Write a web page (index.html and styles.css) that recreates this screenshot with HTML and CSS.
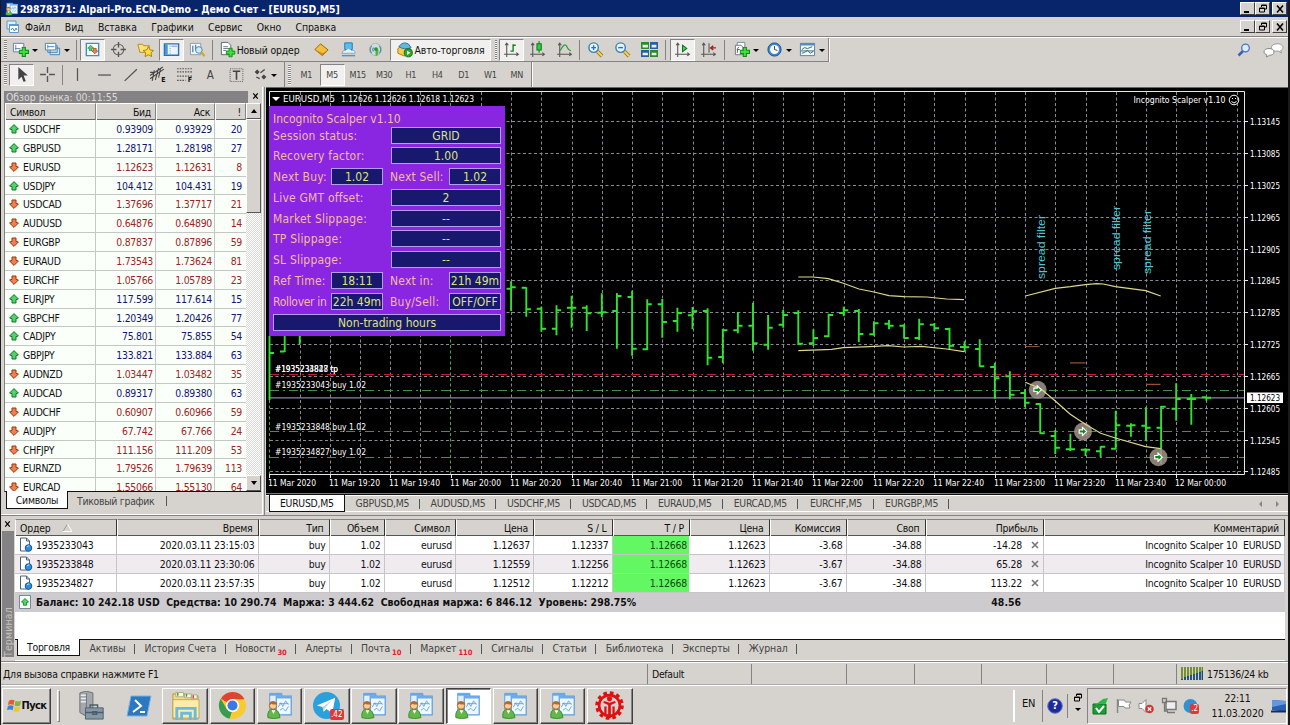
FILE: index.html
```
<!DOCTYPE html>
<html lang="ru">
<head>
<meta charset="UTF-8">
<meta name="viewport" content="width=device-width, initial-scale=1.0">
<title>29878371: Alpari-Pro.ECN-Demo</title>
<link rel="stylesheet" href="styles.css">
</head>
<body>
<svg class="defs" width="0" height="0">
    <symbol id="up" viewBox="0 0 10 10"><path d="M5 .6 9.4 5 7 5.6V9H3V5.6L.6 5z" fill="#4cd668" stroke="#16702c"/></symbol>
    <symbol id="down" viewBox="0 0 10 10"><path d="M5 9.4.6 5 3 4.4V1h4v3.400L9.400 5z" fill="#f08050" stroke="#9a3410"/></symbol>
    <symbol id="axes" viewBox="0 0 16 16"><path d="M3.500 15V2M1 12.500h13M2 4l1.500-2L5 4M12.500 11l2 1.500-2 1.500" fill="none" stroke="#555"/></symbol>
    <symbol id="plus" viewBox="0 0 10 10"><path d="M3.500.5h3v3h3v3h-3v3h-3v-3h-3v-3h3z" fill="#3ee03e" stroke="#0c8a14"/></symbol>
    <symbol id="min" viewBox="0 0 12 10"><path d="M2 8h5" stroke="#000" stroke-width="2"/></symbol>
    <symbol id="restore" viewBox="0 0 12 10"><path d="M4.500 3V1h5v4H8M2.500 4h5v4h-5zM4 1.500h6M2 4.500h6" fill="none" stroke="#000"/></symbol>
    <symbol id="close" viewBox="0 0 12 10"><path d="m3 1.500 6 7M9 1.500l-6 7" stroke="#000" stroke-width="1.600"/></symbol>
    <symbol id="doc" viewBox="0 0 14 16"><path d="M1.500 1h6l3 3v10h-9z" fill="#fff" stroke="#4a6078"/><path d="M7.500 1v3h3" fill="none" stroke="#4a6078"/><circle cx="9.500" cy="11" r="3.300" fill="#2a90dc" stroke="#145898"/><path d="M8 10q1-1.500 2.500-1" stroke="#bfe4ff" fill="none"/></symbol>
    <symbol id="person" viewBox="0 0 30 28">
        <path d="M4 1h13v18H4z" fill="#dff0fc" stroke="#5b9be0"/><path d="M4 1h13v2.500H4z" fill="#6aa6e6"/>
        <path d="M11 4h16v20H11z" fill="#eef8ff" stroke="#5a9ce4" stroke-width="1.300"/><path d="M11 4h16v2.500H11z" fill="#6aaaec"/>
        <path d="m13 16 3-5 2 4 3-6 3 4M15 19l3-2 3 3 3-5M14 12h10" fill="none" stroke="#6aa4e0"/>
        <path d="M2 27q-1-9 5.500-9t7.500 9q-7 2-13 0z" fill="#62b848" stroke="#3f8a2e"/>
        <circle cx="7.500" cy="14" r="4" fill="#f8cc94" stroke="#a86830"/><path d="M3.500 14q0-5 4.500-4.500T12 13q-5 0-6-1z" fill="#b06a30"/><path d="m6 19 2 4 2-4" fill="#fff"/>
    </symbol>
    <symbol id="zoomglass" viewBox="0 0 18 18"><path d="m11 11 5 5" stroke="#a87c10" stroke-width="4"/><path d="m11 11 5 5" stroke="#f4d460" stroke-width="2.200"/><circle cx="7" cy="7" r="5" fill="#e4f6ff" stroke="#3a80b8" stroke-width="1.500"/></symbol>
    <symbol id="arrow" viewBox="0 0 12 12"><path d="m6 1 5 5-5 5V8H2V4h4z" fill="#0a8a1a" stroke="#fff" stroke-width="1.400"/></symbol>
</svg>

<div class="window">
    <header class="title">
        <svg width="14" height="14" viewBox="0 0 30 28"><use href="#person"/></svg>
        <h1>29878371: Alpari-Pro.ECN-Demo - Демо Счет - [EURUSD,M5]</h1>
        <div class="winbtns"><b><svg><use href="#min"/></svg></b><b><svg><use href="#restore"/></svg></b><b><svg><use href="#close"/></svg></b></div>
    </header>
    <nav class="menu">
        <svg class="menu-logo" width="14" height="14" viewBox="0 0 14 14"><path d="M1 1h9v8H1z" fill="#dff0ff" stroke="#5a98d8"/><path d="M3.500 4.500h9v8h-9z" fill="#fff" stroke="#5a98d8"/><path d="M3.500 5h9" stroke="#5a98d8" stroke-width="2"/><path d="m5 10 1.500-2 2 3L10 8l1 2" fill="none" stroke="#48c"/></svg>
        <span>Файл</span><span>Вид</span><span>Вставка</span><span>Графики</span><span>Сервис</span><span>Окно</span><span>Справка</span>
        <div class="winbtns"><b><svg><use href="#min"/></svg></b><b><svg><use href="#restore"/></svg></b><b><svg><use href="#close"/></svg></b></div>
    </nav>

    <div class="toolrow">
        <div class="toolbar tb-main">
            <i class="grip"></i>
            <span class="btn caret narrow"><svg viewBox="0 0 18 16"><path d="M1.500 1.500h11v9h-11z" fill="#fff" stroke="#5a80a8"/><path d="M4 3v6M3 7h6" stroke="#68a" fill="none"/><use href="#plus" x="7" y="5" width="11" height="11"/></svg></span>
            <span class="btn caret narrow"><svg viewBox="0 0 18 16"><path d="M6.500 6.500h10v7h-10zM4 4h10v7H4z" fill="#cfe4f6" stroke="#4a80b0"/><path d="M1.500 1.500h11v7h-11z" fill="#fff" stroke="#4a80b0"/><path d="M4 3v4M4 5h7" stroke="#4a80b0"/></svg></span>
            <i class="sep first"></i>
            <span class="btn on"><svg viewBox="0 0 18 16"><path d="M2.500 1.500h13v13h-13z" fill="#fff" stroke="#3a90c8" stroke-width="1.500"/><use href="#up" x="3.500" y="3" width="7" height="7"/><use href="#down" x="8" y="6" width="7" height="7"/></svg></span>
            <span class="btn"><svg viewBox="0 0 16 16"><circle cx="8" cy="8" r="5" fill="none" stroke="#666"/><path d="M8 1v5M8 10v5M1 8h5M10 8h5" stroke="#555" stroke-width="1.300"/></svg></span>
            <span class="btn"><svg viewBox="0 0 18 16"><path d="M1 2.500h5l1 1.500h6v7H3z" fill="#fce27c" stroke="#b88a18"/><path d="m12 5 1.800 3.500 3.700.5-2.700 2.500.7 4-3.500-2-3.500 2 .7-4L6.500 9l3.700-.5z" fill="#ffe038" stroke="#a87c10"/></svg></span>
            <span class="btn on"><svg viewBox="0 0 18 16"><path d="M1.500 2h15v12h-15z" fill="#eaf6ff" stroke="#2a70b8" stroke-width="1.500"/><path d="M2 2.500h3v11H2z" fill="#4a96d8"/><path d="M9 4.500h6M7 4.500h1M7 7h1M7 9.500h1M7 12h1" stroke="#88b"/></svg></span>
            <span class="btn"><svg viewBox="0 0 18 16"><path d="M1.500 1.500h11v12h-11z" fill="#f4faff" stroke="#89a"/><path d="M4 4v7M7 3v6M10 5v5" stroke="#6688b0" stroke-width="1.500"/><circle cx="10.500" cy="8.500" r="3.500" fill="#cfeaff" stroke="#48a"/><path d="m13 11 3.500 4" stroke="#d8a828" stroke-width="2.500"/></svg></span>
            <i class="sep"></i>
            <span class="btn neworder"><svg viewBox="0 0 18 16"><path d="M2.500.5h7l3 3v10h-10z" fill="#fff" stroke="#567"/><path d="M4.500 5h5M4.500 7h6M4.500 9h3" stroke="#678"/><use href="#plus" x="7" y="6" width="10.500" height="10.500"/></svg>Новый ордер</span>
            <span class="btn"><svg viewBox="0 0 18 16"><path d="m2 8 6-6 8 6.500-6 6z" fill="#f4c03c" stroke="#946010"/><path d="m2 8 8 4 6-3.500-6 6z" fill="#c88818"/></svg></span>
            <span class="btn"><svg viewBox="0 0 18 16"><path d="M5 1h8v7H5z" fill="#58bcf0" stroke="#2478b4"/><path d="M2 12q1-4 4-3 3-4 6 0 4-1 4 3z" fill="#e6f4ff" stroke="#78a8d0"/><path d="M2 14.500h14" stroke="#4898d0" stroke-width="1.500"/></svg></span>
            <span class="btn"><svg viewBox="0 0 18 16"><circle cx="9" cy="8" r="6.500" fill="#cfdde0" stroke="#a4b8bc"/><path d="M5 4q-3 4 0 8M13 4q3 4 0 8M7 6q-2 2 0 4" fill="none" stroke="#5a9098" stroke-width="1.200"/><path d="M9 8v7q4 0 3-7z" fill="#46b83c"/><circle cx="9.500" cy="7.500" r="2" fill="#348c38"/></svg></span>
            <span class="btn autotrade"><svg viewBox="0 0 18 16"><path d="M2 7 8 3l8 5-7 7-7-3z" fill="#f6cc48" stroke="#a87c18"/><path d="M3 5q4-6 10-3l3 4q-7 3-13-1z" fill="#62b8dc" stroke="#287898"/><circle cx="13" cy="11.500" r="4.300" fill="#28a82c" stroke="#0f6c14"/><path d="m11.800 9.200 3.400 2.300-3.400 2.300z" fill="#fff"/></svg>Авто-торговля</span>
            <i class="grip"></i>
            <span class="btn on"><svg viewBox="0 0 16 16"><use href="#axes"/><path d="M9.500 3v7M7 9.500h2.500M9.500 4H12" stroke="#148024" stroke-width="1.300"/></svg></span>
            <span class="btn"><svg viewBox="0 0 16 16"><use href="#axes"/><path d="M9.500 0v11" stroke="#0a7a1a"/><path d="M7.500 2.500h4v6h-4z" fill="#30d040" stroke="#0a7a1a"/></svg></span>
            <span class="btn"><svg viewBox="0 0 16 16"><use href="#axes"/><path d="M4 9q4-8 6-4t4 4" fill="none" stroke="#2a9a3c" stroke-width="1.200"/></svg></span>
            <i class="sep"></i>
            <span class="btn"><svg viewBox="0 0 18 18"><use href="#zoomglass"/><path d="M4.500 7h5M7 4.500v5" stroke="#2870b0" stroke-width="1.500"/></svg></span>
            <span class="btn"><svg viewBox="0 0 18 18"><use href="#zoomglass"/><path d="M4.500 7h5" stroke="#2870b0" stroke-width="1.500"/></svg></span>
            <span class="btn"><svg viewBox="0 0 16 16"><path d="M0 1h7.500v6.500H0zM8.500 8.500H16V15H8.500z" fill="#2c8a2c"/><path d="M8.500 1H16v6.500H8.500zM0 8.500h7.500V15H0z" fill="#2a5ca8"/><path d="M1.500 3.500h5v2.500h-5zM10 3.500h4.500v2.500H10zM1.500 11h5v2.500h-5zM10 11h4.500v2.500H10z" fill="#e4f2e8"/></svg></span>
            <i class="sep wide"></i>
            <span class="btn on"><svg viewBox="0 0 16 16"><use href="#axes"/><path d="m8 4 4 3-4 3z" fill="#58c868" stroke="#0a7a1a"/></svg></span>
            <span class="btn"><svg viewBox="0 0 16 16"><use href="#axes"/><path d="M8.500 2v9" stroke="#555"/><path d="M15 6.500h-4M12.500 4.500l-2.500 2 2.500 2" stroke="#a02020" fill="none" stroke-width="1.300"/></svg></span>
            <i class="sep wide"></i>
            <span class="btn caret"><svg viewBox="0 0 18 16"><path d="M4.500.5h8v11h-8z" fill="#fff" stroke="#789"/><path d="M2.500 3.500h6l2 2v8h-8z" fill="#fff" stroke="#678"/><path d="M6 5.500q-1.500 0-1.500 6M4 8h3" stroke="#555" fill="none"/><use href="#plus" x="7" y="5" width="11" height="11"/></svg></span>
            <span class="btn caret"><svg viewBox="0 0 18 16"><circle cx="9" cy="8" r="7" fill="#3c88d0" stroke="#1c548c"/><circle cx="9" cy="8" r="4.800" fill="#f4faff"/><path d="M9 4.500V8l3 1" fill="none" stroke="#245"/></svg></span>
            <span class="btn caret"><svg viewBox="0 0 18 16"><path d="M1.500 1.500h15v13h-15z" fill="#f0f8ff" stroke="#4a80b0"/><path d="M1.500 2.500h15" stroke="#4a90c8" stroke-width="2.500"/><path d="m3 8 3-2 3 1 5-2M3 12l3-1 3-2 3 3 3-2M2 9.500h14" fill="none" stroke="#466"/></svg></span>
        </div>
        <div class="helpers">
            <svg width="14" height="14" viewBox="0 0 14 14"><path d="M1.500 12.500 6 8" stroke="#3a62b4" stroke-width="2.500"/><circle cx="8.500" cy="5" r="3.800" fill="#dceaff" stroke="#4a74c0" stroke-width="1.300"/></svg>
            <svg width="21" height="15" viewBox="0 0 21 15"><path d="M14 .8c4 0 6 1.700 6 3.700 0 1.500-1 2.600-2.300 3l.8 2.500-3-1.900C11 8.500 8.500 7 8.500 4.500 8.500 2.300 10.500.8 14 .8z" fill="#fff" stroke="#999"/><path d="M6 5.500c3 0 5 1.300 5 3.500s-2 3.300-4.500 3.300L3.500 14l.3-2.300C2 11.200 1 10.200 1 9c0-2.200 2-3.500 5-3.500z" fill="#fff" stroke="#888"/></svg>
        </div>
    </div>

    <div class="toolrow second">
        <div class="toolbar tb-draw">
            <i class="grip"></i>
            <span class="btn on"><svg viewBox="0 0 16 16"><path d="M5 1v12l3-3 2 5 2-1-2-5h4z" fill="#444"/></svg></span>
            <span class="btn"><svg viewBox="0 0 16 16"><path d="M8 1v5.500M8 9.500V15M1 8h5.500M9.500 8H15" stroke="#555" stroke-width="1.300"/></svg></span>
            <i class="sep"></i>
            <span class="btn"><svg viewBox="0 0 16 16"><path d="M8 2v12" stroke="#555" stroke-width="1.200"/></svg></span>
            <span class="btn"><svg viewBox="0 0 16 16"><path d="M2 8.500h12" stroke="#555" stroke-width="1.200"/></svg></span>
            <span class="btn"><svg viewBox="0 0 16 16"><path d="M2.500 14 14 3" stroke="#555" stroke-width="1.200"/></svg></span>
            <span class="btn"><svg viewBox="0 0 16 16"><path d="m1 12 13-9M1 9l12-8M3 14l2-10M6 13l3-11M9 11l2-9M1 6h4" stroke="#444" fill="none"/></svg><sub>E</sub></span>
            <span class="btn"><svg viewBox="0 0 16 16"><path d="M1 2.500h14M1 5.500h14M1 9.500h14M1 13.500h8" stroke="#555" stroke-dasharray="1.500 1"/></svg><sub>F</sub></span>
            <span class="btn letter">A</span>
            <span class="btn"><svg viewBox="0 0 16 16"><path d="M2 2.500h12v12H2z" fill="none" stroke="#666" stroke-dasharray="1 1"/><path d="M4.500 5h7M8 5v8" stroke="#444" stroke-width="1.500"/></svg></span>
            <span class="btn caret"><svg viewBox="0 0 18 16"><path d="m5 2 3 3-3 3-3-3zM13 8l3 3-3 3-3-3z" fill="#444"/><path d="m9 6 5-4M4 11l4 2" stroke="#444" stroke-width="1.500"/></svg></span>
            <i class="sep tall"></i>
            <i class="grip"></i>
            <span class="tf">M1</span><span class="tf on">M5</span><span class="tf">M15</span><span class="tf">M30</span><span class="tf">H1</span><span class="tf">H4</span><span class="tf">D1</span><span class="tf">W1</span><span class="tf">MN</span>
        </div>
    </div>

    <main class="work">
        <section class="market">
            <div class="market-title"><span>Обзор рынка: 00:11:55</span><svg width="9" height="8"><use href="#close"/></svg></div>
            <div class="market-body">
                <div class="market-table">
                    <div class="mrow mhead"><span>Символ</span><span>Бид</span><span>Аск</span><span>!</span></div>
                    <div id="quotes"></div>
                </div>
                <div class="scroll"><b class="s-up"></b><b class="thumb"></b><b class="s-down"></b></div>
            </div>
            <div class="tabs market-tabs"><span class="active">Символы</span><span>Тиковый график</span></div>
        </section>
        <section class="charts">
            <div class="chart">
                <svg id="chart" width="1022" height="405" viewBox="266 88 1022 405"></svg>
                <div class="ea">
                    <p>Incognito Scalper v1.10</p>
                    <div class="ea-row"><label>Session status:</label><b class="wide">GRID</b></div>
                    <div class="ea-row"><label>Recovery factor:</label><b class="wide">1.00</b></div>
                    <div class="ea-row"><label class="short">Next Buy:</label><b>1.02</b><label class="short mid">Next Sell:</label><b>1.02</b></div>
                    <div class="ea-row"><label>Live GMT offset:</label><b class="wide">2</b></div>
                    <div class="ea-row"><label>Market Slippage:</label><b class="wide">--</b></div>
                    <div class="ea-row"><label>TP Slippage:</label><b class="wide">--</b></div>
                    <div class="ea-row"><label>SL Slippage:</label><b class="wide">--</b></div>
                    <div class="ea-row"><label class="short">Ref Time:</label><b>18:11</b><label class="short mid">Next in:</label><b>21h 49m</b></div>
                    <div class="ea-row"><label class="short tight">Rollover in</label><b>22h 49m</b><label class="short mid">Buy/Sell:</label><b>OFF/OFF</b></div>
                    <div class="ea-row"><b class="full">Non-trading hours</b></div>
                </div>
            </div>
            <div class="tabs chart-tabs">
                <span class="active">EURUSD,M5</span><span>GBPUSD,M5</span><span>AUDUSD,M5</span><span>USDCHF,M5</span><span>USDCAD,M5</span><span>EURAUD,M5</span><span>EURCAD,M5</span><span>EURCHF,M5</span><span>EURGBP,M5</span>
                <svg width="22" height="8" viewBox="0 0 22 8"><path d="M4 1 1 4l3 3zM18 1l3 3-3 3z" fill="#848284"/></svg>
            </div>
        </section>
    </main>

    <section class="terminal">
        <div class="side"><svg width="9" height="8"><use href="#close"/></svg><span>Терминал</span></div>
        <div class="term-main">
            <div class="trow thead"><span>Ордер <svg width="9" height="8" viewBox="0 0 9 8"><path d="M4.500 0 0 7.500" stroke="#999"/><path d="M4.500 0 9 7.500H0" stroke="#fff" fill="none"/></svg></span><span>Время</span><span>Тип</span><span>Объем</span><span>Символ</span><span>Цена</span><span>S / L</span><span>T / P</span><span>Цена</span><span>Комиссия</span><span>Своп</span><span>Прибыль</span><span>Комментарий</span></div>
            <div id="orders"></div>
            <div class="total"><svg width="12" height="14" viewBox="0 0 12 14"><path d="M.5.5h11v13H.5z" fill="#f4fff4" stroke="#789"/><use href="#up" x="2" y="3" width="8" height="8"/></svg><span>Баланс: 10 242.18 USD&nbsp; Средства: 10 290.74&nbsp; Маржа: 3 444.62&nbsp; Свободная маржа: 6 846.12&nbsp; Уровень: 298.75%</span><em>48.56</em></div>
            <div class="blank"></div>
            <div class="tabs term-tabs">
                <span class="active">Торговля</span><span>Активы</span><span>История Счета</span><span>Новости<sub>30</sub></span><span>Алерты</span><span>Почта<sub>10</sub></span><span>Маркет<sub>110</sub></span><span>Сигналы</span><span>Статьи</span><span>Библиотека</span><span>Эксперты</span><span>Журнал</span>
            </div>
        </div>
    </section>

    <footer class="status">
        <span>Для вызова справки нажмите F1</span><span>Default</span><span></span><span></span><span></span><span></span><span></span><span></span>
        <span><svg width="22" height="13" viewBox="0 0 22 13"><path d="M1 0v12M4 0v11M7 0v10M10 0v9M13 0v8M16 0v7M19 0v6M21.500 0v5" stroke="#6c8a1c" stroke-width="1.800"/><path d="M1 12v1M4 10v3M7 9v4M10 8v5M13 7v6M16 6v7M19 5v8M21.500 4v9" stroke="#164878" stroke-width="1.800"/></svg>175136/24 kb</span>
    </footer>

    <footer class="taskbar">
        <div class="start"><svg width="15" height="15" viewBox="0 0 16 16"><path d="M2 3q3-2 6-.5L7 7.500Q4 6 1 7.500z" fill="#e8582c"/><path d="M9 3q3 1.500 6 0l-1 5q-3 1.500-6 0z" fill="#7cb83c"/><path d="M1 8.500q3-1.500 6 0L6 13q-3-1.500-6 0z" fill="#3c84d8"/><path d="M8 9q3 1.500 6 0l-1 5q-3 1.500-6 0z" fill="#f4c430"/></svg>Пуск</div>
        <i class="divider"></i>
        <span class="quick"><svg width="28" height="30" viewBox="0 0 30 32"><path d="m2 2 7-2 7 2v22l-7 3-7-4z" fill="#a4a8ac" stroke="#686c70"/><path d="M3 4.500h6M3 8h6M3 11.500h6" stroke="#e8ecee" stroke-width="1.500"/><path d="M9 2v24" stroke="#6c7074"/><path d="M8 18h19v12H8z" fill="#8498a8" stroke="#4c5c68"/><path d="M13 18v-3h8v3M8 23h19M16 22h4v3h-4z" fill="none" stroke="#4c5c68" stroke-width="1.500"/></svg></span>
        <span class="quick"><svg width="26" height="24" viewBox="0 0 26 24"><path d="M5 2h20l-4 20H1z" fill="#2c78c0" stroke="#78b4e8"/><path d="m9 6 6 6-8 6M14 18h5" fill="none" stroke="#fff" stroke-width="2"/></svg></span>
        <span class="task"><svg viewBox="0 0 32 30"><path d="M3 3h12l2 2h12v24H3z" fill="#f4dc84" stroke="#b8943c"/><path d="M6 1.500h8V6H6zM15 3h7v4h-7zM22 4h6v4h-6z" fill="#fff8dc" stroke="#aa8"/><path d="M3 9h27v19H3z" fill="#fcecac" stroke="#c8a850"/><path d="M7 30V18h19v12M12 30v-7h9v7" fill="none" stroke="#68bce4" stroke-width="3"/><path d="M8 2v3M17 3v3" stroke="#3a3" stroke-width="1.500"/><path d="M24 4.500v3" stroke="#d33" stroke-width="1.500"/></svg></span>
        <span class="task"><svg viewBox="0 0 30 30"><circle cx="15" cy="15" r="14" fill="#f8cc30"/><path d="M15 15 3 8A14 14 0 0 1 27.500 8.500H15z" fill="#dc4434"/><path d="M2.800 8 9 18.500l6 1-3 9.300A14 14 0 0 1 2.800 8z" fill="#389c50"/><circle cx="15" cy="15" r="6.800" fill="#fff"/><circle cx="15" cy="15" r="5.200" fill="#3c78e4"/></svg></span>
        <span class="task mt"><svg><use href="#person"/></svg></span>
        <span class="task badge"><svg viewBox="0 0 30 30"><circle cx="15" cy="15" r="14" fill="#2ca0dc"/><path d="M5 15 24 7l-3 16-6-4.500-3 3-1-5z" fill="#fff"/><path d="m11 16.500 9-6.500-7 8-1 3.500z" fill="#b4d4e8"/></svg><em>.42</em></span>
        <span class="task mt"><svg><use href="#person"/></svg></span>
        <span class="task mt"><svg><use href="#person"/></svg></span>
        <span class="task mt pressed"><svg><use href="#person"/></svg></span>
        <span class="task mt"><svg><use href="#person"/></svg></span>
        <span class="task mt"><svg><use href="#person"/></svg></span>
        <span class="task"><svg viewBox="0 0 32 32"><circle cx="16" cy="16" r="11.500" fill="none" stroke="#e01010" stroke-width="3"/><circle cx="16" cy="16" r="14" fill="none" stroke="#e01010" stroke-width="3.500" stroke-dasharray="4 3.330"/><circle cx="16" cy="8.500" r="2.800" fill="#e01010"/><path d="M14.500 30V15.500L9 13l1-2 6 2 6-2 1 2-5.500 2.500V30z" fill="#e01010"/><path d="M11.500 17v11M20.500 17v11" stroke="#e01010" stroke-width="2.500"/></svg></span>
        <div class="lang"><span>EN</span></div>
        <div class="help"><svg width="16" height="16" viewBox="0 0 16 16"><circle cx="8" cy="8" r="7.300" fill="#1c2ca0" stroke="#6070c0"/></svg><b>?</b></div>
        <div class="shrink"><svg width="12" height="10"><use href="#restore"/></svg><i></i></div>
        <div class="tray">
            <svg width="17" height="18" viewBox="0 0 17 18"><path d="M1 7h13v10H1z" fill="#1c9c34" stroke="#0c6c20"/><path d="m3 8 8-6 5-1-2 5z" fill="#2cb848"/><path d="m4 11 3 4 5-6" stroke="#fff" stroke-width="2" fill="none"/></svg>
            <svg width="16" height="16" viewBox="0 0 16 16"><path d="M1.500 1v14" stroke="#888" stroke-width="1.500"/><path d="M2.500 2h6l1 2h5.500l-2 3 1 3H9L8 8.500H2.500z" fill="#fff" stroke="#888"/></svg>
            <svg width="16" height="16" viewBox="0 0 16 16"><path d="M1 5.500h3l4-4v13l-4-4H1z" fill="#fff" stroke="#888"/><circle cx="11.500" cy="11" r="4.300" fill="#d83030"/><path d="m9.800 9.300 3.400 3.400M13.200 9.300l-3.400 3.400" stroke="#fff" stroke-width="1.300"/></svg>
            <svg width="16" height="17" viewBox="0 0 16 17"><path d="M5 4.500h10v8H5z" fill="#eee" stroke="#777" stroke-width="1.500"/><path d="M6 15.500h8M1.500 1.500h4v4h-4zM3.500 6v8H7" fill="none" stroke="#777" stroke-width="1.300"/></svg>
            <div class="badge"><svg width="15" height="16" viewBox="0 0 15 16"><circle cx="7.500" cy="8" r="7" fill="#3490cc"/></svg><em>.2</em></div>
            <div class="clock"><span>22:11</span><span>11.03.2020</span></div>
            <svg width="15" height="14" viewBox="0 0 15 14"><path d="m1 1 14 1v11L1 11z" fill="#2860b8"/><path d="m1 1 14 1v3L1 8z" fill="#6498dc"/><path d="M0 12.500h15" stroke="#1c2c50" stroke-width="2"/></svg>
        </div>
    </footer>
</div>
<script src="main.js"></script>
</body>
</html>
```
FILE: styles.css
```
* {
    box-sizing: border-box;
}
body {
    margin: 0;
    background: #1a1a1a;
    font: 10.4px/14px "DejaVu Sans Condensed", "DejaVu Sans", sans-serif;
    font-stretch: condensed;
    letter-spacing: -.28px;
    color: #111;
}
h1, p {
    margin: 0;
}
.defs {
    position: absolute;
}
.window {
    width: 1290px;
    height: 725px;
    padding: 0 2px 0 1px;
    display: flex;
    flex-direction: column;
    overflow: hidden;
}
.window > * {
    background: #d6d3ce;
    flex: none;
}

/* title and menu */
.title {
    height: 17px;
    display: flex;
    align-items: center;
    padding-left: 4px;
    background: #08246b;
    color: #fff;
}
.title h1 {
    font-size: 10.4px;
    letter-spacing: 0;
    margin-left: 1px;
    flex: 1;
}
.winbtns {
    display: flex;
    margin-left: auto;
    padding-right: 1px;
}
.winbtns b {
    width: 15px;
    height: 13px;
    background: #d6d3ce;
    border: 1px solid;
    border-color: #fff #404040 #404040 #fff;
    display: flex;
    align-items: center;
    justify-content: center;
}
.winbtns b:last-child {
    margin-left: 2px;
}
.winbtns svg {
    width: 12px;
    height: 10px;
}
.menu {
    height: 20px;
    display: flex;
    align-items: center;
    padding-left: 5px;
    border-bottom: 1px solid #848284;
    letter-spacing: -.1px;
}
.menu > span {
    margin-right: 14.400px;
}
.menu-logo {
    margin-right: 5px;
}

/* toolbars */
.toolrow {
    height: 25px;
    display: flex;
    border-top: 1px solid #fff;
}
.toolrow.second {
    border-top: 0;
}
.toolbar {
    display: flex;
    align-items: center;
    border-right: 1px solid #848284;
    border-bottom: 1px solid #848284;
    box-shadow: 1px 1px 0 #fff;
}
.tb-main {
    width: 828px;
}
.tb-draw {
    width: 531px;
    border-bottom: 0;
    box-shadow: 1px 0 0 #fff;
}
.grip {
    width: 3px;
    height: 20px;
    margin: 0 2px 0 3px;
    background: repeating-linear-gradient(#848284 0 1px, #f4f2ee 1px 2px);
}
.sep {
    width: 1px;
    height: 20px;
    margin: 0 2px 0 1px;
    background: #848284;
}
.sep.first {
    margin: 0 3px;
}
.sep.wide {
    margin: 0 4px 0 2px;
}
.btn {
    width: 27px;
    height: 22px;
    display: flex;
    align-items: center;
    justify-content: center;
    white-space: nowrap;
    flex: none;
}
.btn svg {
    width: 17px;
    height: 17px;
    flex: none;
}
.btn.on,
.autotrade,
.tf.on {
    width: 25px;
    background: #f1f0ee;
    border: 1px solid;
    border-color: #848284 #fff #fff #848284;
}
.btn.caret {
    width: 33px;
}
.btn.narrow {
    width: 32px;
}
.btn.caret::after {
    content: "";
    border: 3px solid transparent;
    border-top-color: #000;
    border-bottom: 0;
    margin: 2px 0 0 3px;
}
.btn.neworder {
    width: 93px;
    letter-spacing: -.15px;
    padding-right: 4px;
}
.neworder svg {
    margin-right: 1px;
}
.btn.autotrade {
    width: 101px;
    margin: 0 1px;
    letter-spacing: -.1px;
}
.autotrade svg {
    margin-right: 2px;
}
.btn sub {
    font-size: 7px;
    font-weight: bold;
    margin: 10px 0 0 -5px;
    line-height: 8px;
}
.letter {
    font-size: 11.500px;
    color: #444;
}
.tb-draw .btn {
    width: 26.500px;
}
.tb-draw .btn.on {
    width: 25px;
}
.tb-draw .caret {
    width: 30px;
}
.tb-draw .caret svg {
    width: 15px;
}
.sep.tall {
    height: 25px;
    margin: 0 0 0 4px;
}
.tf {
    width: 26.500px;
    text-align: center;
    font-size: 9px;
    color: #444;
    line-height: 22px;
}
.tf.on {
    height: 22px;
    line-height: 20px;
    width: 25px;
}
.helpers {
    margin-left: auto;
    display: flex;
    align-items: center;
    gap: 12px;
    padding-right: 4px;
}

/* market watch */
.work {
    height: 428px;
    display: flex;
}
.market {
    width: 262px;
    padding: 3px 1px 0 3px;
    border-right: 1px solid #fff;
    border-bottom: 1px solid #fff;
}
.market-title {
    display: flex;
    align-items: center;
    height: 13px;
}
.market-title span {
    width: 244px;
    background: #848284;
    color: #dedbd6;
    line-height: 12px;
    padding-left: 2px;
    letter-spacing: 0;
}
.market-title svg {
    margin: 0 0 2px 3px;
}
.market-body {
    height: 389px;
    display: flex;
    overflow: hidden;
    border-left: 1px solid #848284;
    border-bottom: 1px solid #111;
}
.market-table {
    width: 241px;
    background: #fafffa;
}
.mrow {
    display: grid;
    grid-template-columns: 91px 60px 59px 31px;
    height: 18.860px;
    line-height: 18px;
    border-bottom: 1px solid #c4c8c4;
}
.mrow span {
    text-align: right;
    padding-right: 2px;
    border-right: 1px solid #c4c8c4;
    color: #15156e;
}
.mrow span:first-child {
    text-align: left;
    color: #111;
    display: flex;
    align-items: center;
    gap: 4px;
    padding-left: 4px;
}
.mrow span:last-child {
    border-right: 0;
    padding-right: 4px;
}
.mrow svg {
    width: 10px;
    height: 10px;
}
.mrow.fall span:not(:first-child) {
    color: #9c2424;
}
.mrow.mhead {
    height: 17px;
    line-height: 16px;
    background: #d6d3ce;
    border-bottom: 1px solid #666;
}
.mhead span,
.mhead span:last-child {
    color: #111;
    border-top: 1px solid #fff;
    border-left: 1px solid #fff;
    border-right: 1px solid #848284;
    padding-right: 4px;
}
.scroll {
    width: 15px;
    display: flex;
    flex-direction: column;
    background: repeating-conic-gradient(#fff 0 25%, #dcdad6 0 50%) 0 0 / 2px 2px;
}
.scroll b {
    background: #d6d3ce;
    border: 1px solid;
    border-color: #fff #555 #555 #fff;
    height: 16px;
    display: flex;
    align-items: center;
    justify-content: center;
}
.scroll .thumb {
    height: 94px;
}
.s-down {
    margin-top: auto;
}
.s-up::after,
.s-down::after {
    content: "";
    border: 3px solid transparent;
    border-bottom: 4px solid #000;
    border-top: 0;
}
.s-down::after {
    transform: rotate(180deg);
}

/* tab strips */
.tabs {
    display: flex;
    align-items: flex-start;
    color: #444;
}
.tabs span {
    line-height: 16px;
    position: relative;
    white-space: nowrap;
}
.tabs span:not(.active)::after {
    content: "";
    position: absolute;
    right: 0;
    top: 4px;
    height: 10px;
    border-right: 1px solid #555;
}
.tabs .active {
    background: #fff;
    color: #111;
    border: 1px solid #111;
    border-top: 0;
    text-align: center;
}
.market-tabs {
    padding-left: 2px;
}
.market-tabs span {
    line-height: 18px;
}
.market-tabs .active {
    width: 62px;
    margin-top: -1px;
    height: 18px;
}
.market-tabs span:last-child {
    width: 99px;
    padding-left: 9px;
}

/* chart area */
.charts {
    flex: 1;
    border-left: 1px solid #848284;
    padding-left: 1px;
    margin-left: 1px;
}
.chart {
    position: relative;
    height: 407px;
    background: #000;
    border-top: 1px solid #666;
    border-bottom: 1px solid #777;
}
.chart > svg {
    display: block;
}
.chart text {
    font: 9px "DejaVu Sans Condensed", sans-serif;
    letter-spacing: 0;
    fill: #fff;
}
.grid {
    stroke: #8a8a94;
    stroke-dasharray: 3 2.500;
    fill: none;
}
.frame {
    stroke: #e8e8e8;
    fill: none;
}
.day {
    stroke: #48a848;
    stroke-dasharray: 3 2.500;
    fill: none;
}
.ohlc {
    stroke: #2ee22e;
    stroke-width: 1.900;
    fill: none;
}
.band {
    stroke: #ddd68c;
    stroke-width: 1.200;
    fill: none;
}
.order {
    stroke: #44904a;
    stroke-dasharray: 9 4 2 4;
}
.tp {
    stroke: #c01c34;
    stroke-dasharray: 9 4 2 4;
}
.price {
    stroke: #8888a0;
    stroke-width: 1.300;
}
.mark {
    stroke: #94503c;
    stroke-width: 1.200;
}
.chart .spread {
    font: 11px "Liberation Sans", sans-serif;
    fill: #50c8d0;
}
.ea {
    position: absolute;
    left: 3px;
    top: 18px;
    width: 236px;
    height: 230px;
    background: #8a26e2;
    padding: 5px 4px;
    font: 12px/16px "DejaVu Sans Condensed", "DejaVu Sans", sans-serif;
    letter-spacing: .2px;
    color: #f2bc9c;
    white-space: nowrap;
}
.ea p {
    height: 15.500px;
    letter-spacing: 0;
}
.ea-row {
    display: flex;
    height: 20.800px;
}
.ea-row label {
    width: 118px;
    line-height: 18px;
}
.ea-row .short {
    width: 58px;
}
.ea-row .tight {
    letter-spacing: -.3px;
}
.ea-row .mid {
    margin-left: 7px;
    width: 59px;
}
.ea-row b {
    width: 52px;
    height: 17px;
    font-weight: normal;
    line-height: 16px;
    display: flex;
    justify-content: center;
    overflow: hidden;
    background: #18186e;
    border: 1px solid #b49cf0;
    color: #dfe27c;
    letter-spacing: 0;
}
.ea-row .wide {
    width: 110px;
}
.ea-row .full {
    width: 228px;
}
.chart-tabs {
    padding-left: 3px;
    border-top: 1px solid #111;
    border-bottom: 1px solid #fff;
    height: 18px;
    box-shadow: inset 0 1px #fff;
}
.chart-tabs span {
    width: 75.600px;
    text-align: center;
}
.chart-tabs svg {
    margin: 5px 8px 0 auto;
}

/* terminal */
.terminal {
    height: 147px;
    display: flex;
    border-top: 1px solid #848284;
    border-bottom: 1px solid #848284;
    padding: 3px 3px 0 0;
}
.side {
    width: 15px;
}
.side svg {
    display: block;
    margin: 1px 0 1px 2px;
}
.side span {
    display: block;
    writing-mode: vertical-rl;
    transform: rotate(180deg);
    width: 12px;
    line-height: 12px;
    height: 126px;
    margin: 3px 0 0 1px;
    background: #848284;
    color: #c4c1bc;
    letter-spacing: .2px;
}
.term-main {
    width: 1270px;
    background: #fff;
}
.trow {
    display: grid;
    grid-template-columns: 101.500px 142px 71px 55px 71.500px 78px 78.500px 77.500px 79.500px 77px 79px 118.500px 241px;
    height: 18.860px;
    line-height: 18px;
    border-bottom: 1px solid #c8c4c8;
    letter-spacing: -.2px;
}
.trow:nth-child(2) {
    background: #efebef;
}
.trow span {
    text-align: right;
    padding-right: 3px;
    border-right: 1px solid #c8c4c8;
    white-space: pre;
}
.trow span:first-child {
    text-align: left;
    display: flex;
    align-items: center;
    gap: 3px;
    padding-left: 4px;
}
.trow .hit {
    background: linear-gradient(#63f763, #63f763) 0 0 / 76px 100% no-repeat;
    color: #0a4a0a;
    border-right: 0;
}
.trow .profit {
    display: flex;
    justify-content: flex-end;
    align-items: center;
    gap: 7px;
    padding-right: 2px;
}
.trow.thead {
    height: 17px;
    line-height: 16px;
    background: #d6d3ce;
    border-bottom: 1px solid #555;
}
.thead span {
    border-top: 1px solid #848284;
    border-right: 1px solid #333;
    border-left: 1px solid #fff;
    padding-right: 5px;
}
.thead span:first-child {
    gap: 10px;
}
.total {
    height: 19px;
    background: #cecbce;
    display: flex;
    align-items: center;
    font-weight: bold;
    padding-left: 4px;
    position: relative;
    letter-spacing: .02px;
}
.total svg {
    margin-right: 5px;
}
.total em {
    position: absolute;
    right: 264px;
    font-style: normal;
}
.blank {
    height: 28px;
    border-bottom: 1px solid #111;
}
.term-tabs {
    background: #d6d3ce;
    height: 20px;
    padding-left: 2px;
    letter-spacing: -.08px;
}
.term-tabs .active {
    width: 63px;
    padding: 0;
    margin-top: -1px;
    height: 17px;
    letter-spacing: -.28px;
}
.term-tabs span {
    padding: 0 9.500px;
}
.term-tabs sub {
    color: #e01c24;
    font: bold 7.500px "DejaVu Sans Condensed", sans-serif;
    margin-left: 2px;
    position: relative;
    top: 0;
    line-height: 0;
}

/* status bar */
.status {
    height: 23px;
    display: grid;
    grid-template-columns: 646px 104px 95px 68px 67px 65px 67px 63px 1fr;
    align-items: center;
    border-top: 1px solid #fff;
    border-bottom: 1px solid #aaa;
}
.status span {
    display: flex;
    align-items: center;
    height: 20px;
    gap: 4px;
    padding-left: 4px;
    border-left: 1px solid #848284;
    letter-spacing: -.3px;
}
.status span:first-child {
    padding-left: 2px;
    border-left: 0;
    letter-spacing: -.2px;
}

/* task bar */
.taskbar {
    height: 40px;
    display: flex;
    align-items: center;
    border-top: 1px solid #fff;
    padding-left: 1px;
}
.start,
.task {
    height: 36px;
    border: 1px solid;
    border-color: #fff #404040 #404040 #fff;
    box-shadow: inset -1px -1px #848284;
    display: flex;
    align-items: center;
    justify-content: center;
}
.start {
    width: 49px;
    font-weight: bold;
    font-size: 11px;
    letter-spacing: -.6px;
}
.divider {
    width: 3px;
    height: 32px;
    border: 1px solid;
    border-color: #fff #848284 #848284 #fff;
    margin: 0 8px 0 6px;
}
.quick {
    width: 47.200px;
    display: flex;
    justify-content: center;
}
.task {
    width: 45.600px;
    margin-right: 1.600px;
    flex: none;
}
.task svg {
    width: 31px;
    height: 29px;
}
.task.mt svg {
    width: 28px;
    height: 27px;
}
.task.pressed {
    background: #fff;
    border-color: #404040 #fff #fff #404040;
    box-shadow: inset 1px 1px #848284;
}
.badge {
    position: relative;
    letter-spacing: 0;
}
.badge em {
    position: absolute;
    right: 5px;
    bottom: 3px;
    background: #e03838;
    color: #fff;
    border-radius: 2px;
    font: 8px/11px "DejaVu Sans Condensed", sans-serif;
    padding: 0 1px;
}
.lang {
    margin-left: auto;
    height: 32px;
    line-height: 28px;
    width: 30px;
    border-left: 2px solid #fff;
    padding-left: 7px;
    border-right: 1px solid #848284;
    font-size: 11px;
}
.help {
    width: 25px;
    height: 24px;
    border-right: 1px solid #848284;
    display: grid;
    place-items: center;
}
.help > * {
    grid-area: 1 / 1;
}
.help b {
    color: #fff;
    font-size: 11px;
    line-height: 12px;
}
.shrink {
    width: 19px;
    display: flex;
    flex-direction: column;
    align-items: center;
    gap: 5px;
    padding-bottom: 8px;
}
.shrink i {
    border: 3px solid transparent;
    border-top-color: #000;
    border-bottom: 0;
}
.tray {
    width: 200px;
    height: 36px;
    border: 1px solid;
    border-color: #848284 #fff #fff #848284;
    display: flex;
    align-items: center;
    padding-left: 4px;
    gap: 6.500px;
    margin-right: 1px;
}
.tray > svg {
    flex: none;
}
.tray .badge {
    height: 16px;
}
.tray .badge em {
    right: -1px;
    bottom: 0;
    line-height: 10px;
}
.clock {
    width: 66px;
    flex: none;
    margin-right: -6px;
    letter-spacing: -.15px;
    line-height: 15px;
    display: flex;
    flex-direction: column;
    align-items: center;
}
```
FILE: main.js
```
(function(){
    let quotes = [
        ["USDCHF","0.93909","0.93929",20,1],
        ["GBPUSD","1.28171","1.28198",27,1],
        ["EURUSD","1.12623","1.12631",8,0],
        ["USDJPY","104.412","104.431",19,1],
        ["USDCAD","1.37696","1.37717",21,0],
        ["AUDUSD","0.64876","0.64890",14,0],
        ["EURGBP","0.87837","0.87896",59,0],
        ["EURAUD","1.73543","1.73624",81,0],
        ["EURCHF","1.05766","1.05789",23,0],
        ["EURJPY","117.599","117.614",15,1],
        ["GBPCHF","1.20349","1.20426",77,1],
        ["CADJPY","75.801","75.855",54,1],
        ["GBPJPY","133.821","133.884",63,1],
        ["AUDNZD","1.03447","1.03482",35,0],
        ["AUDCAD","0.89317","0.89380",63,1],
        ["AUDCHF","0.60907","0.60966",59,0],
        ["AUDJPY","67.742","67.766",24,0],
        ["CHFJPY","111.156","111.209",53,0],
        ["EURNZD","1.79526","1.79639",113,0],
        ["EURCAD","1.55066","1.55130",64,0]
    ];
    document.querySelector("#quotes").innerHTML = quotes.map(function(q){
        return `<div class="mrow ${q[4] ? "rise" : "fall"}">
            <span><svg><use href="#${q[4] ? "up" : "down"}"/></svg>${q[0]}</span>
            <span>${q[1]}</span><span>${q[2]}</span><span>${q[3]}</span>
        </div>`;
    }).join("");

    let orders = [
        ["1935233043","2020.03.11 23:15:03","1.12637","1.12337","-3.68","-14.28"],
        ["1935233848","2020.03.11 23:30:06","1.12559","1.12256","-3.67","65.28"],
        ["1935234827","2020.03.11 23:57:35","1.12512","1.12212","-3.67","113.22"]
    ];
    document.querySelector("#orders").innerHTML = orders.map(function(o){
        return `<div class="trow"><span><svg width="14" height="16"><use href="#doc"/></svg>${o[0]}</span>`
            + `<span>${o[1]}</span><span>buy</span><span>1.02</span><span>eurusd</span><span>${o[2]}</span><span>${o[3]}</span>`
            + `<span class="hit">1.12668</span><span>1.12623</span><span>${o[4]}</span><span>-34.88</span>`
            + `<span class="profit">${o[5]}<svg width="12" height="8" viewBox="0 0 12 8"><path d="m3 1 6 6M9 1 3 7" stroke="#777" stroke-width="1.600"/></svg></span>`
            + `<span>Incognito Scalper 10  EURUSD</span></div>`;
    }).join("");

    // chart
    let left = 269.3, step = 15.115;
    let out = "";
    let text = function(x, y, w, str, extra){
        return `<text x="${x}" y="${y}" textLength="${w}" lengthAdjust="spacingAndGlyphs" ${extra || ""}>${str}</text>`;
    };
    let grid = "";
    for(let i = 1; i <= 32; i++){
        if(i != 6) grid += `M${Math.round(left + i * step * 2) + .5} 92V474`;
    }
    for(let i = 0; i < 12; i++){
        let y = Math.round(121.3 + i * 31.83);
        grid += `M270 ${y + .5}H1244`;
        out += `<path class="frame" d="M1244 ${y + .5}h4"/>`;
        out += text(1250, y + 4, 30, (1.13145 - i * .0006).toFixed(5));
    }
    out += `<path class="grid" d="${grid}"/>`;
    out += `<path class="day" d="M450.5 92V474M269.5 400V474"/>`;
    out += `<path class="frame" d="M269.500 336V91.500H1244.500V474.500H269"/>`;
    for(let i = 0; i < 16; i++){
        let x = Math.round(left + i * step * 4);
        let min = 19 * 60 + i * 20;
        let hh = Math.floor(min / 60) % 24;
        let str = i == 0 ? "11 Mar 2020" : (i == 15 ? "12" : "11") + " Mar " + String(hh).padStart(2, "0") + ":" + String(min % 60).padStart(2, "0");
        out += `<path class="frame" d="M${x + .5} 474v4"/>` + text(x - 1, 486, i ? 51 : 48, str);
    }

    out += `<path class="tp" d="M270 374.500H1244"/>`;
    [390.5, 431.5, 457.5].forEach(function(y){
        out += `<path class="order" d="M270 ${y}H1244"/>`;
    });
    out += `<path class="price" d="M270 397.800H1244"/>`;
    out += `<path class="mark" d="M1025 346.500h14.500M1070 362.800h15.500M1146 384.300h14.500"/><path d="M1083 367.500h6" stroke="#1c1c90"/>`;

    // high, low, open, close - starting from bar 16
    let bars = [
        [281.3,311,288.7,287.3],[287.3,316.7,287.7,309.3],[306.7,331.7,308.7,328.7],[305.3,335.3,328.7,310.3],
        [295.7,327.7,307.7,307.7],[305.3,331,307.7,313.3],[293.3,317.3,312.7,312.3],[293,348.7,311,296],
        [290.7,355.7,297,348.7],[299.3,350,349.3,304.3],[299,337.7,304.3,322],[307.7,331.7,321,313],
        [307,329.3,315.3,311.3],[308.3,365.3,311,357.7],[328.7,363.3,357,330.3],[312,333.3,330.3,325.7],
        [302.7,350.7,325.7,343.3],[315,349.7,344.7,327.7],[309.7,327.7,324.7,315],[310.3,345,313,343.7],
        [329.3,346,343.3,338],[313.7,337.3,336.3,315],[306.7,316.3,313,310.3],[309,342,311,334],
        [321.3,335.7,334.3,323.3],[320,329.3,323.7,325.7],[324.3,338.7,325.7,338],[318.7,340,338,324.3],
        [323,331.3,324.7,328.3],[327.7,349.3,329,345.7],[341.3,352,347,347.3],[339.3,366.7,349,366.3],
        [362.7,398.7,367,378.3],[371.3,399.3,376.3,394.7],[389.3,407.3,393,402.7],[403.3,433.7,404,433.3],
        [430,454,436,447.7],[433.7,451,449.3,449.3],[448.3,456,449.7,449.7],[446.3,457.3,451.3,446.7],
        [410.7,449.3,448.7,425.3],[423.3,436.7,425.7,425.3],[407.3,440.7,425.7,427.7],[406,464,427.7,406.7],
        [383.3,420.7,408.7,399],[394,424.7,399,399],[396.7,400.7,397.3,397.7]
    ];
    let d = "M269.500 336V400M269 353h5M284.700 336V352M280 351.500h4.700M299.700 336V344";
    bars.forEach(function(b, i){
        let x = (left + (i + 16) * step).toFixed(1);
        d += `M${x} ${b[0]}V${b[1]}M${x} ${b[2]}h-4.600M${x} ${b[3]}h4.600`;
    });
    out += `<path class="ohlc" d="${d}"/>`;

    [
        "798.3,277 813.3,277 828.3,278.7 843.3,283.3 859,289 874,292 889,295.7 904,296.7 926.7,297 946.7,299 964,299.7",
        "798.3,350.7 831.7,349.3 843.3,347.7 870,346.7 888.3,345.7 904,347 921.7,346.3 946.7,349 964,351.7",
        "1025.3,296 1055.3,288.3 1070.3,286.7 1085.3,284.7 1096.7,283.7 1103.3,284 1115.3,286.7 1145.7,290.7 1160.7,296"
    ].forEach(function(p){
        out += `<polyline class="band" points="${p}"/>`;
    });
    [[1037.7,389.8],[1083,431.5],[1158.5,457.2]].forEach(function(c){
        out += `<circle cx="${c[0]}" cy="${c[1]}" r="9" fill="#a09488" opacity=".85"/>`;
    });
    out += `<polyline class="band" points="1025.3,382.3 1040.7,388.7 1055.3,401 1070.3,414.3 1085.3,424.3 1100.7,433.3 1115.3,438 1145.7,446.7 1160.7,448.7"/>`;
    [[1037.7,389.8],[1083,431.5],[1158.5,457.2]].forEach(function(c){
        out += `<use href="#arrow" x="${c[0] - 5.5}" y="${c[1] - 5}" width="10" height="10"/>`;
    });

    [[1044.5,279],[1119.5,270],[1150.5,274]].forEach(function(s){
        out += text(0, 0, 64, "spread filter", `class="spread" transform="translate(${s[0]} ${s[1]}) rotate(-90)"`);
    });
    out += text(275, 372, 63, "#1935233848 tp") + text(275, 372, 63, "#1935234827 tp");
    out += text(275, 388, 91, "#1935233043 buy 1.02");
    out += text(275, 430, 91, "#1935233848 buy 1.02");
    out += text(275, 455, 91, "#1935234827 buy 1.02");
    out += `<path d="M272 97h8l-4 4z" fill="#fff"/>` + text(283, 102, 52, "EURUSD,M5") + text(341, 102, 133, "1.12626 1.12626 1.12618 1.12623");
    out += text(1133.5, 103, 92, "Incognito Scalper v1.10");
    out += `<g fill="none" stroke="#fff"><circle cx="1234" cy="100" r="4.800"/><path d="M1231.500 101.500q2.500 3 5 0M1232 98.500h1M1235 98.500h1"/></g>`;
    out += `<path d="M1247 392.500h36v10.500h-36z" fill="#fff"/>` + text(1250, 401, 30, "1.12623", `style="fill:#000"`);
    document.querySelector("#chart").innerHTML = out;
})();
```
